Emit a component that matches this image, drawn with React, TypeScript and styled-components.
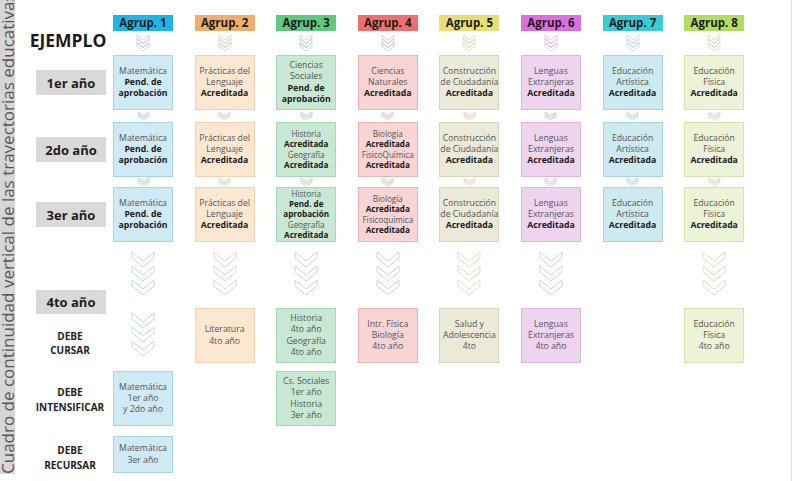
import React from "react";
import styled, { createGlobalStyle } from "styled-components";

const Global = createGlobalStyle`
  html, body { margin: 0; padding: 0; background: #fff; }
  body { font-family: "Open Sans", "Noto Sans", sans-serif; }
  #root { width: 793px; height: 481px; }
`;

type Palette = { head: string; bg: string; border: string; chev: string };

const palettes: Palette[] = [
  { head: "#1cb5e8", bg: "#cfe9f5", border: "#a7d4e8", chev: "#c4d9e2" },
  { head: "#f0ae6c", bg: "#fce7d1", border: "#f1d2b2", chev: "#dcd6cf" },
  { head: "#5dca7e", bg: "#c9e8d3", border: "#a8d7b7", chev: "#ccd9d0" },
  { head: "#f06f6c", bg: "#f9d4d4", border: "#ecb4b4", chev: "#e0d0d0" },
  { head: "#e8df73", bg: "#ebe9d8", border: "#d9d6ba", chev: "#e2dfc4" },
  { head: "#dd6ee0", bg: "#eed4ef", border: "#ddb5df", chev: "#dccfdd" },
  { head: "#35cdd9", bg: "#cdeaf0", border: "#a8d7e0", chev: "#c9dde1" },
  { head: "#b3dc5e", bg: "#ecf3d6", border: "#d5e3b1", chev: "#d9e0c8" },
];

type Cell = { lines: string[]; compact?: boolean } | null;

const row1: Cell[] = [
  { lines: ["Matemática", "*Pend. de", "*aprobación"] },
  { lines: ["Prácticas del", "Lenguaje", "*Acreditada"] },
  { lines: ["Ciencias", "Sociales", "*Pend. de", "*aprobación"] },
  { lines: ["Ciencias", "Naturales", "*Acreditada"] },
  { lines: ["Construcción", "de Ciudadanía", "*Acreditada"] },
  { lines: ["Lenguas", "Extranjeras", "*Acreditada"] },
  { lines: ["Educación", "Artística", "*Acreditada"] },
  { lines: ["Educación", "Física", "*Acreditada"] },
];

const row2: Cell[] = [
  { lines: ["Matemática", "*Pend. de", "*aprobación"] },
  { lines: ["Prácticas del", "Lenguaje", "*Acreditada"] },
  { lines: ["Historia", "*Acreditada", "Geografía", "*Acreditada"], compact: true },
  { lines: ["Biología", "*Acreditada", "FisicoQuímica", "*Acreditada"], compact: true },
  { lines: ["Construcción", "de Ciudadanía", "*Acreditada"] },
  { lines: ["Lenguas", "Extranjeras", "*Acreditada"] },
  { lines: ["Educación", "Artística", "*Acreditada"] },
  { lines: ["Educación", "Física", "*Acreditada"] },
];

const row3: Cell[] = [
  { lines: ["Matemática", "*Pend. de", "*aprobación"] },
  { lines: ["Prácticas del", "Lenguaje", "*Acreditada"] },
  { lines: ["Historia", "*Pend. de", "*aprobación", "Geografía", "*Acreditada"], compact: true },
  { lines: ["Biología", "*Acreditada", "Fisicoquímica", "*Acreditada"], compact: true },
  { lines: ["Construcción", "de Ciudadanía", "*Acreditada"] },
  { lines: ["Lenguas", "Extranjeras", "*Acreditada"] },
  { lines: ["Educación", "Artística", "*Acreditada"] },
  { lines: ["Educación", "Física", "*Acreditada"] },
];

const cursar: Cell[] = [
  null,
  { lines: ["Literatura", "4to año"] },
  { lines: ["Historia", "4to año", "Geografía", "4to año"] },
  { lines: ["Intr. Física", "Biología", "4to año"] },
  { lines: ["Salud y", "Adolescencia", "4to"] },
  { lines: ["Lenguas", "Extranjeras", "4to año"] },
  null,
  { lines: ["Educación", "Física", "4to año"] },
];

const intensificar: Cell[] = [
  { lines: ["Matemática", "1er año", "y 2do año"] },
  null,
  { lines: ["Cs. Sociales", "1er año", "Historia", "3er año"] },
  null,
  null,
  null,
  null,
  null,
];

const recursar: Cell[] = [
  { lines: ["Matemática", "3er año"] },
  null,
  null,
  null,
  null,
  null,
  null,
  null,
];

const bigChevronCols = [0, 1, 2, 3, 4, 5, 7];

/* ---------- layout ---------- */

const Page = styled.div`
  display: flex;
  align-items: flex-start;
  width: 792px;
  height: 481px;
  box-sizing: border-box;
  border-right: 1px solid #e3e3e3;
  overflow: hidden;
  background: #fff;
`;

const Sidebar = styled.aside`
  flex: 0 0 15px;
  height: 474px;
  background: #d6d6d6;
  overflow: hidden;
`;

const SideTitle = styled.div`
  writing-mode: vertical-rl;
  transform: rotate(180deg);
  height: 474px;
  width: 15px;
  white-space: nowrap;
  font-size: 17px;
  line-height: 15px;
  color: #575757;
  text-align: start;
`;

const Board = styled.div`
  display: grid;
  grid-template-columns: 98px repeat(8, 81.6px);
  grid-template-rows: 16px 24px 55px 12px 55px 10px 55px 66px 55px 8px 55px 10px 37px;
  padding-top: 15px;
`;

const Title = styled.div`
  grid-column: 1;
  grid-row: 1 / span 2;
  align-self: end;
  justify-self: center;
  margin-left: 8px;
  margin-bottom: 3px;
  font-size: 17.5px;
  line-height: 24px;
  font-weight: 700;
  color: #1b1b1b;
`;

const YearTag = styled.div<{ $row: number; $shift?: number }>`
  grid-column: 1;
  grid-row: ${(p) => p.$row};
  align-self: ${(p) => (p.$shift ? "end" : "center")};
  margin-bottom: ${(p) => (p.$shift ? `-${p.$shift}px` : "0")};
  justify-self: center;
  margin-left: 14px;
  width: 70px;
  height: ${(p) => (p.$shift ? 24 : 25)}px;
  background: #d9d9d9;
  display: flex;
  align-items: center;
  justify-content: center;
  font-size: 13px;
  font-weight: 700;
  color: #1e1e1e;
`;

const DebeLabel = styled.div<{ $row: number; $offset: number }>`
  grid-column: 1;
  grid-row: ${(p) => p.$row};
  align-self: center;
  justify-self: center;
  margin-left: 12px;
  margin-top: ${(p) => p.$offset}px;
  font-size: 10px;
  line-height: 14.5px;
  font-weight: 700;
  color: #1e1e1e;
  text-align: center;
`;

const Header = styled.div<{ $col: number; $color: string }>`
  grid-column: ${(p) => p.$col};
  grid-row: 1;
  justify-self: start;
  width: 60px;
  height: 16px;
  background: ${(p) => p.$color};
  color: #1c1c1c;
  font-size: 11.5px;
  font-weight: 700;
  line-height: 16px;
  text-align: center;
`;

const ChevSlot = styled.div<{ $col: number; $row: number; $align: string; $top?: number }>`
  grid-column: ${(p) => p.$col};
  grid-row: ${(p) => p.$row};
  justify-self: start;
  align-self: ${(p) => p.$align};
  margin-top: ${(p) => p.$top ?? 0}px;
  width: 60px;
  display: flex;
  justify-content: center;
  line-height: 0;
`;

const Box = styled.div<{ $col: number; $row: number; $p: Palette; $compact?: boolean }>`
  grid-column: ${(p) => p.$col};
  grid-row: ${(p) => p.$row};
  justify-self: start;
  width: 60px;
  height: 100%;
  box-sizing: border-box;
  background: ${(p) => p.$p.bg};
  border: 1px solid ${(p) => p.$p.border};
  display: flex;
  flex-direction: column;
  align-items: center;
  justify-content: center;
  text-align: center;
  font-size: ${(p) => (p.$compact ? 8.1 : 8.7)}px;
  line-height: ${(p) => (p.$compact ? 10.3 : 11.3)}px;
`;

const Line = styled.span<{ $bold?: boolean }>`
  display: block;
  white-space: nowrap;
  font-weight: ${(p) => (p.$bold ? 700 : 400)};
  color: ${(p) => (p.$bold ? "#1a1a1a" : "#555")};
`;

/* ---------- drawings ---------- */

type ChevProps = { count: number; w: number; depth: number; thick: number; pitch: number; color: string };

const ChevronStack: React.FC<ChevProps> = ({ count, w, depth, thick, pitch, color }) => {
  const h = (count - 1) * pitch + depth + thick + 2;
  return (
    <svg width={w + 2} height={h} viewBox={`0 0 ${w + 2} ${h}`}>
      {Array.from({ length: count }).map((_, i) => {
        const y = 1 + i * pitch;
        const d = `M1 ${y} L${1 + w / 2} ${y + depth} L${1 + w} ${y} L${1 + w} ${y + thick} L${1 + w / 2} ${
          y + depth + thick
        } L1 ${y + thick} Z`;
        return <path key={i} d={d} fill="#fff" stroke={color} strokeWidth={1} strokeLinejoin="miter" />;
      })}
    </svg>
  );
};

const BigChevrons = ({ color }: { color: string }) => (
  <ChevronStack count={3} w={22} depth={9} thick={6} pitch={14} color={color} />
);
const HeadChevrons = ({ color }: { color: string }) => (
  <ChevronStack count={3} w={12} depth={5} thick={3} pitch={4} color={color} />
);
const StepChevrons = ({ color }: { color: string }) => (
  <ChevronStack count={2} w={11} depth={3.5} thick={2} pitch={2.5} color={color} />
);

const renderRow = (cells: Cell[], row: number) =>
  cells.map((c, i) =>
    c ? (
      <Box key={`${row}-${i}`} $col={i + 2} $row={row} $p={palettes[i]} $compact={c.compact}>
        {c.lines.map((l, j) =>
          l.startsWith("*") ? (
            <Line key={j} $bold>
              {l.slice(1)}
            </Line>
          ) : (
            <Line key={j}>{l}</Line>
          )
        )}
      </Box>
    ) : null
  );

export default function App() {
  return (
    <>
      <Global />
      <Page>
        <Sidebar>
          <SideTitle>Cuadro de continuidad vertical de las trayectorias educativas</SideTitle>
        </Sidebar>
        <Board>
          <Title>EJEMPLO</Title>
          <YearTag $row={3}>1er año</YearTag>
          <YearTag $row={5}>2do año</YearTag>
          <YearTag $row={7}>3er año</YearTag>
          <YearTag $row={8} $shift={6}>
            4to año
          </YearTag>
          <DebeLabel $row={9} $offset={15}>
            DEBE
            <br />
            CURSAR
          </DebeLabel>
          <DebeLabel $row={11} $offset={2}>
            DEBE
            <br />
            INTENSIFICAR
          </DebeLabel>
          <DebeLabel $row={13} $offset={6}>
            DEBE
            <br />
            RECURSAR
          </DebeLabel>

          {palettes.map((p, i) => (
            <Header key={`h${i}`} $col={i + 2} $color={p.head}>
              Agrup. {i + 1}
            </Header>
          ))}
          {palettes.map((p, i) => (
            <ChevSlot key={`hc${i}`} $col={i + 2} $row={2} $align="center">
              <HeadChevrons color={p.chev} />
            </ChevSlot>
          ))}
          {renderRow(row1, 3)}
          {palettes.map((p, i) => (
            <ChevSlot key={`s1${i}`} $col={i + 2} $row={4} $align="center">
              <StepChevrons color={p.chev} />
            </ChevSlot>
          ))}
          {renderRow(row2, 5)}
          {palettes.map((p, i) => (
            <ChevSlot key={`s2${i}`} $col={i + 2} $row={6} $align="center">
              <StepChevrons color={p.chev} />
            </ChevSlot>
          ))}
          {renderRow(row3, 7)}
          {bigChevronCols.map((i) => (
            <ChevSlot key={`b${i}`} $col={i + 2} $row={8} $align="start" $top={9}>
              <BigChevrons color={palettes[i].chev} />
            </ChevSlot>
          ))}
          <ChevSlot $col={2} $row={9} $align="start" $top={4}>
            <BigChevrons color={palettes[0].chev} />
          </ChevSlot>
          {renderRow(cursar, 9)}
          {renderRow(intensificar, 11)}
          {renderRow(recursar, 13)}
        </Board>
      </Page>
    </>
  );
}
